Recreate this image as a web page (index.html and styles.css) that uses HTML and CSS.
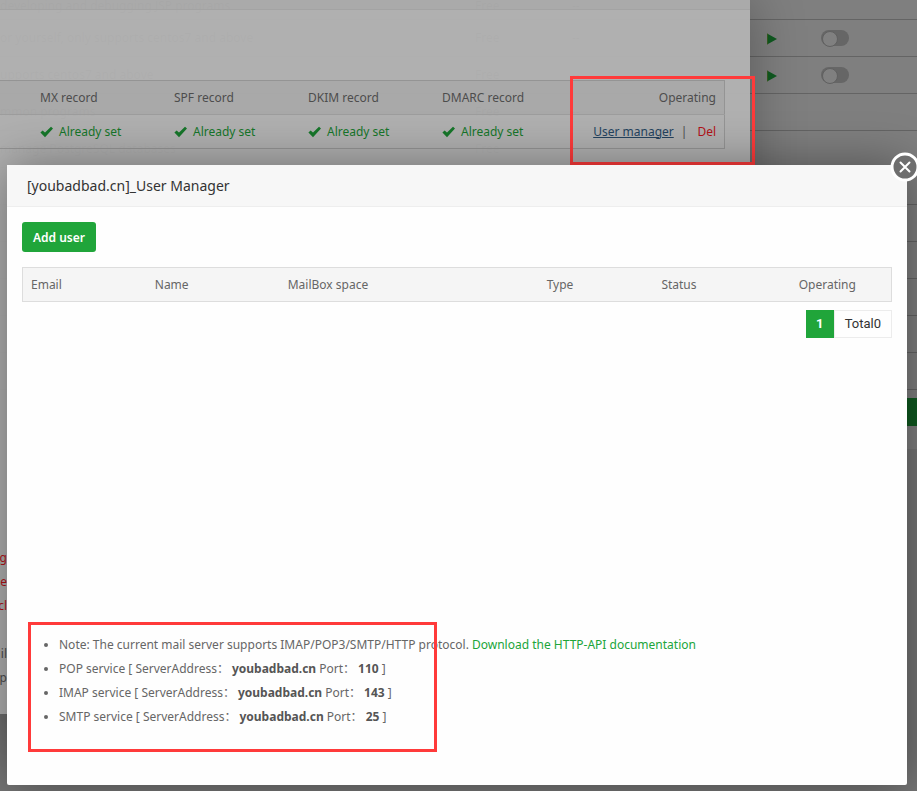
FILE: index.html
```html
<!DOCTYPE html>
<html lang="en">
<head>
<meta charset="utf-8">
<title>User Manager</title>
<link rel="stylesheet" href="styles.css">
</head>
<body>
<svg class="defs" aria-hidden="true">
  <symbol id="check" viewBox="0 0 14 12"><path d="M.4 6.6 2.6 4.6 5 6.5 11 .8 13 2.6 5 11.2Z" fill="currentColor"/></symbol>
  <symbol id="play" viewBox="0 0 10 12"><path d="M0 0.5 10 6 0 11.5Z" fill="#0f5a20"/><path d="M0 .5V11.5" stroke="#5c6420"/></symbol>
</svg>

<main class="page">
  <div class="app"><span>developing and debugging JSP programs</span><span>Free</span><span>--</span><span></span><span></span></div>
  <div class="app"><span>or yourself, only supports centos7 and above</span><span>Free</span><span>--</span><span><svg class="play"><use href="#play"/></svg></span><span><input class="switch" type="checkbox" aria-label="Display on home page"></span></div>
  <div class="app"><span>upports centos7 and above</span><span>Free</span><span>--</span><span><svg class="play"><use href="#play"/></svg></span><span><input class="switch" type="checkbox" aria-label="Display on home page"></span></div>
  <div class="app"><span>mmon programs</span><span>Free</span><span>--</span><span></span><span></span></div>
  <div class="app"><span>manage PostgreSQL databases</span><span>Free</span><span>--</span><span></span><span></span></div>
  <div class="app"></div>
  <div class="app"></div>
  <div class="app"></div>
  <div class="app"></div>
  <div class="app"></div>
  <div class="app"></div>
  <div class="page-pager"></div>
  <div class="page-foot"></div>
</main>

<section class="domains">
  <div class="domains-title"></div>
  <table class="records">
    <colgroup><col class="lead"><col class="rec"><col class="rec"><col class="rec"><col class="rec"><col></colgroup>
    <thead><tr><th></th><th>MX record</th><th>SPF record</th><th>DKIM record</th><th>DMARC record</th><th class="end">Operating</th></tr></thead>
    <tbody><tr>
      <td></td>
      <td class="ok"><svg><use href="#check"/></svg>Already set</td>
      <td class="ok"><svg><use href="#check"/></svg>Already set</td>
      <td class="ok"><svg><use href="#check"/></svg>Already set</td>
      <td class="ok"><svg><use href="#check"/></svg>Already set</td>
      <td class="end"><a class="manage" href="#">User manager</a><span class="bar">|</span><a class="del" href="#">Del</a></td>
    </tr></tbody>
  </table>
  <div class="tips">
    <p class="warn">g</p><p class="warn">he</p><p class="warn">cl</p>
    <p class="gap">il</p><p>p</p>
  </div>
</section>
<div class="mark mark-link"></div>

<section class="dialog" role="dialog" aria-labelledby="dialog-title">
  <h1 id="dialog-title">[youbadbad.cn]_User Manager</h1>
  <button class="close" type="button" aria-label="Close"><svg viewBox="0 0 30 30"><circle cx="15" cy="15" r="13" fill="#6e6e6e" stroke="#fff" stroke-width="3"/><path d="M10.5 10.5 19.5 19.5M19.5 10.5 10.5 19.5" stroke="#fff" stroke-width="2" stroke-linecap="round"/></svg></button>
  <div class="content">
    <button class="add" type="button">Add user</button>
    <table class="users">
      <colgroup><col class="c1"><col class="c2"><col class="c3"><col class="c4"><col class="c5"><col></colgroup>
      <thead><tr><th>Email</th><th>Name</th><th>MailBox space</th><th>Type</th><th>Status</th><th>Operating</th></tr></thead>
    </table>
    <div class="pager"><span class="current">1</span><span class="total">Total0</span></div>
    <div class="notes">
      <ul>
        <li>Note: The current mail server supports IMAP/POP3/SMTP/HTTP protocol. <a href="#">Download the HTTP-API documentation</a></li>
        <li>POP service [ ServerAddress：<b>youbadbad.cn</b> Port：<b>110</b> ]</li>
        <li>IMAP service [ ServerAddress：<b>youbadbad.cn</b> Port：<b>143</b> ]</li>
        <li>SMTP service [ ServerAddress：<b>youbadbad.cn</b> Port：<b>25</b> ]</li>
      </ul>
      <div class="mark mark-notes"></div>
    </div>
  </div>
</section>
</body>
</html>
```
FILE: styles.css
```css
* { box-sizing: border-box; }
body {
  margin: 0;
  position: relative;
  min-height: 100vh;
  overflow: hidden;
  background: #7f7f7f;
  font: 12px/16px "Noto Sans", "Noto Sans CJK SC", sans-serif;
  color: #666;
}
.defs { position: absolute; width: 0; height: 0; }
table { border-collapse: collapse; table-layout: fixed; }
th { font-weight: 400; text-align: left; }
a { text-decoration: none; }

/* application list under the dialogs */
.page { min-height: 100vh; display: flex; flex-direction: column; }
.app {
  display: grid;
  grid-template-columns: 475px 97px 195px 54px 1fr;
  align-items: center;
  height: 37px;
  border-bottom: 1px solid #646464;
  line-height: 12px;
  color: #444;
}
.app:first-child { height: 20px; align-items: end; }
.app:first-child span { padding-bottom: 12px; }
.play { display: block; width: 10px; height: 12px; margin-top: 2px; }
.switch {
  appearance: none;
  display: block;
  width: 28px;
  height: 16px;
  margin: 0;
  border-radius: 8px;
  background: #666;
}
.switch::before {
  content: "";
  display: block;
  width: 14px;
  height: 14px;
  margin: 1px;
  border: 1px solid #606060;
  border-radius: 50%;
  background: #808080;
}
.page-pager { align-self: flex-end; width: 50%; height: 28px; margin: 8px 0 23px; background: #0f5a20; }
.page-foot { flex: 1; background: #767676; }

/* domain list dialog */
.domains {
  position: absolute;
  inset: 0 167px 77px 0;
  display: flex;
  flex-direction: column;
  background: rgba(179, 179, 179, .95);
  box-shadow: 1px 1px 50px rgba(0, 0, 0, .3);
}
.domains-title { height: 10px; margin-bottom: 70px; background: rgba(0, 0, 0, .03); border-bottom: 1px solid #a3a3a3; }
.records { width: calc(100% - 25px); border: 1px solid #949494; border-left: 0; color: #4d4d4d; }
.records th, .records td { height: 34px; padding: 0 8px; }
.records thead { background: rgba(0, 0, 0, .04); }
.records thead tr { border-bottom: 1px solid #9d9d9d; }
.lead { width: 32px; }
.rec { width: 134px; }
.records .end { text-align: right; white-space: nowrap; }
.records .ok { color: #16762a; }
.ok svg { width: 14px; height: 12px; margin-right: 5px; vertical-align: -2px; }
.manage { color: #24435f; text-decoration: underline; }
.bar { margin: 0 10px 0 7px; }
.del { color: #b31217; }
.tips { width: 7px; margin-top: auto; padding-bottom: 24px; color: #4d4d4d; }
.tips p { display: flex; justify-content: flex-end; margin: 0; line-height: 24px; }
.tips .warn { color: #b31217; }
.tips .gap { margin-top: 24px; }

/* user manager dialog */
.dialog {
  position: absolute;
  inset: 165px 10px 6px 7px;
  display: flex;
  flex-direction: column;
  border-radius: 2px;
  background: #fefefe;
  box-shadow: 1px 1px 50px rgba(0, 0, 0, .4);
}
h1 {
  margin: 0;
  padding: 0 20px;
  font-size: 14px;
  font-weight: 400;
  line-height: 41px;
  color: #333;
  background: #f7f7f7;
  border-bottom: 1px solid #eee;
}
.close {
  position: absolute;
  top: -13px;
  right: -13px;
  width: 30px;
  height: 30px;
  padding: 0;
  border: 0;
  background: none;
}
.close svg { display: block; }
.content { flex: 1; display: flex; flex-direction: column; align-items: flex-start; padding: 15px; }
.add {
  height: 30px;
  padding: 0 11px;
  border: 0;
  border-radius: 3px;
  background: #20a53a;
  color: #fff;
  font: 600 12px/32px "Noto Sans", sans-serif;
}
.users { width: 100%; margin-top: 15px; border: 1px solid #ddd; background: #f5f5f5; }
.users th { height: 34px; padding: 0 8px; }
.c1 { width: 14.3%; }
.c2 { width: 15.3%; }
.c3 { width: 29.8%; }
.c4 { width: 13.2%; }
.c5 { width: 15.8%; }
.pager {
  display: flex;
  align-self: flex-end;
  margin-top: 8px;
  font: 13px/26px "Roboto", sans-serif;
  color: #333;
}
.pager span { border: 1px solid #ececec; padding: 0 10px; }
.pager .current { width: 28px; padding: 0; text-align: center; border-color: #20a53a; background: #20a53a; color: #fff; font-weight: 700; }
.notes { position: relative; margin-top: auto; padding: 0 0 41px 6px; }
.notes ul { margin: 0; padding-left: 31px; line-height: 24px; }
.notes b { margin-left: 3px; font-weight: 700; color: #555; }
.notes a { color: #20a53a; }
.mark { position: absolute; border: 3px solid #ff3a3a; pointer-events: none; }
.mark-link { top: 76px; right: 162px; width: 185px; height: 89px; }
.mark-notes { top: -11px; left: 6px; width: 409px; height: 130px; }
```
